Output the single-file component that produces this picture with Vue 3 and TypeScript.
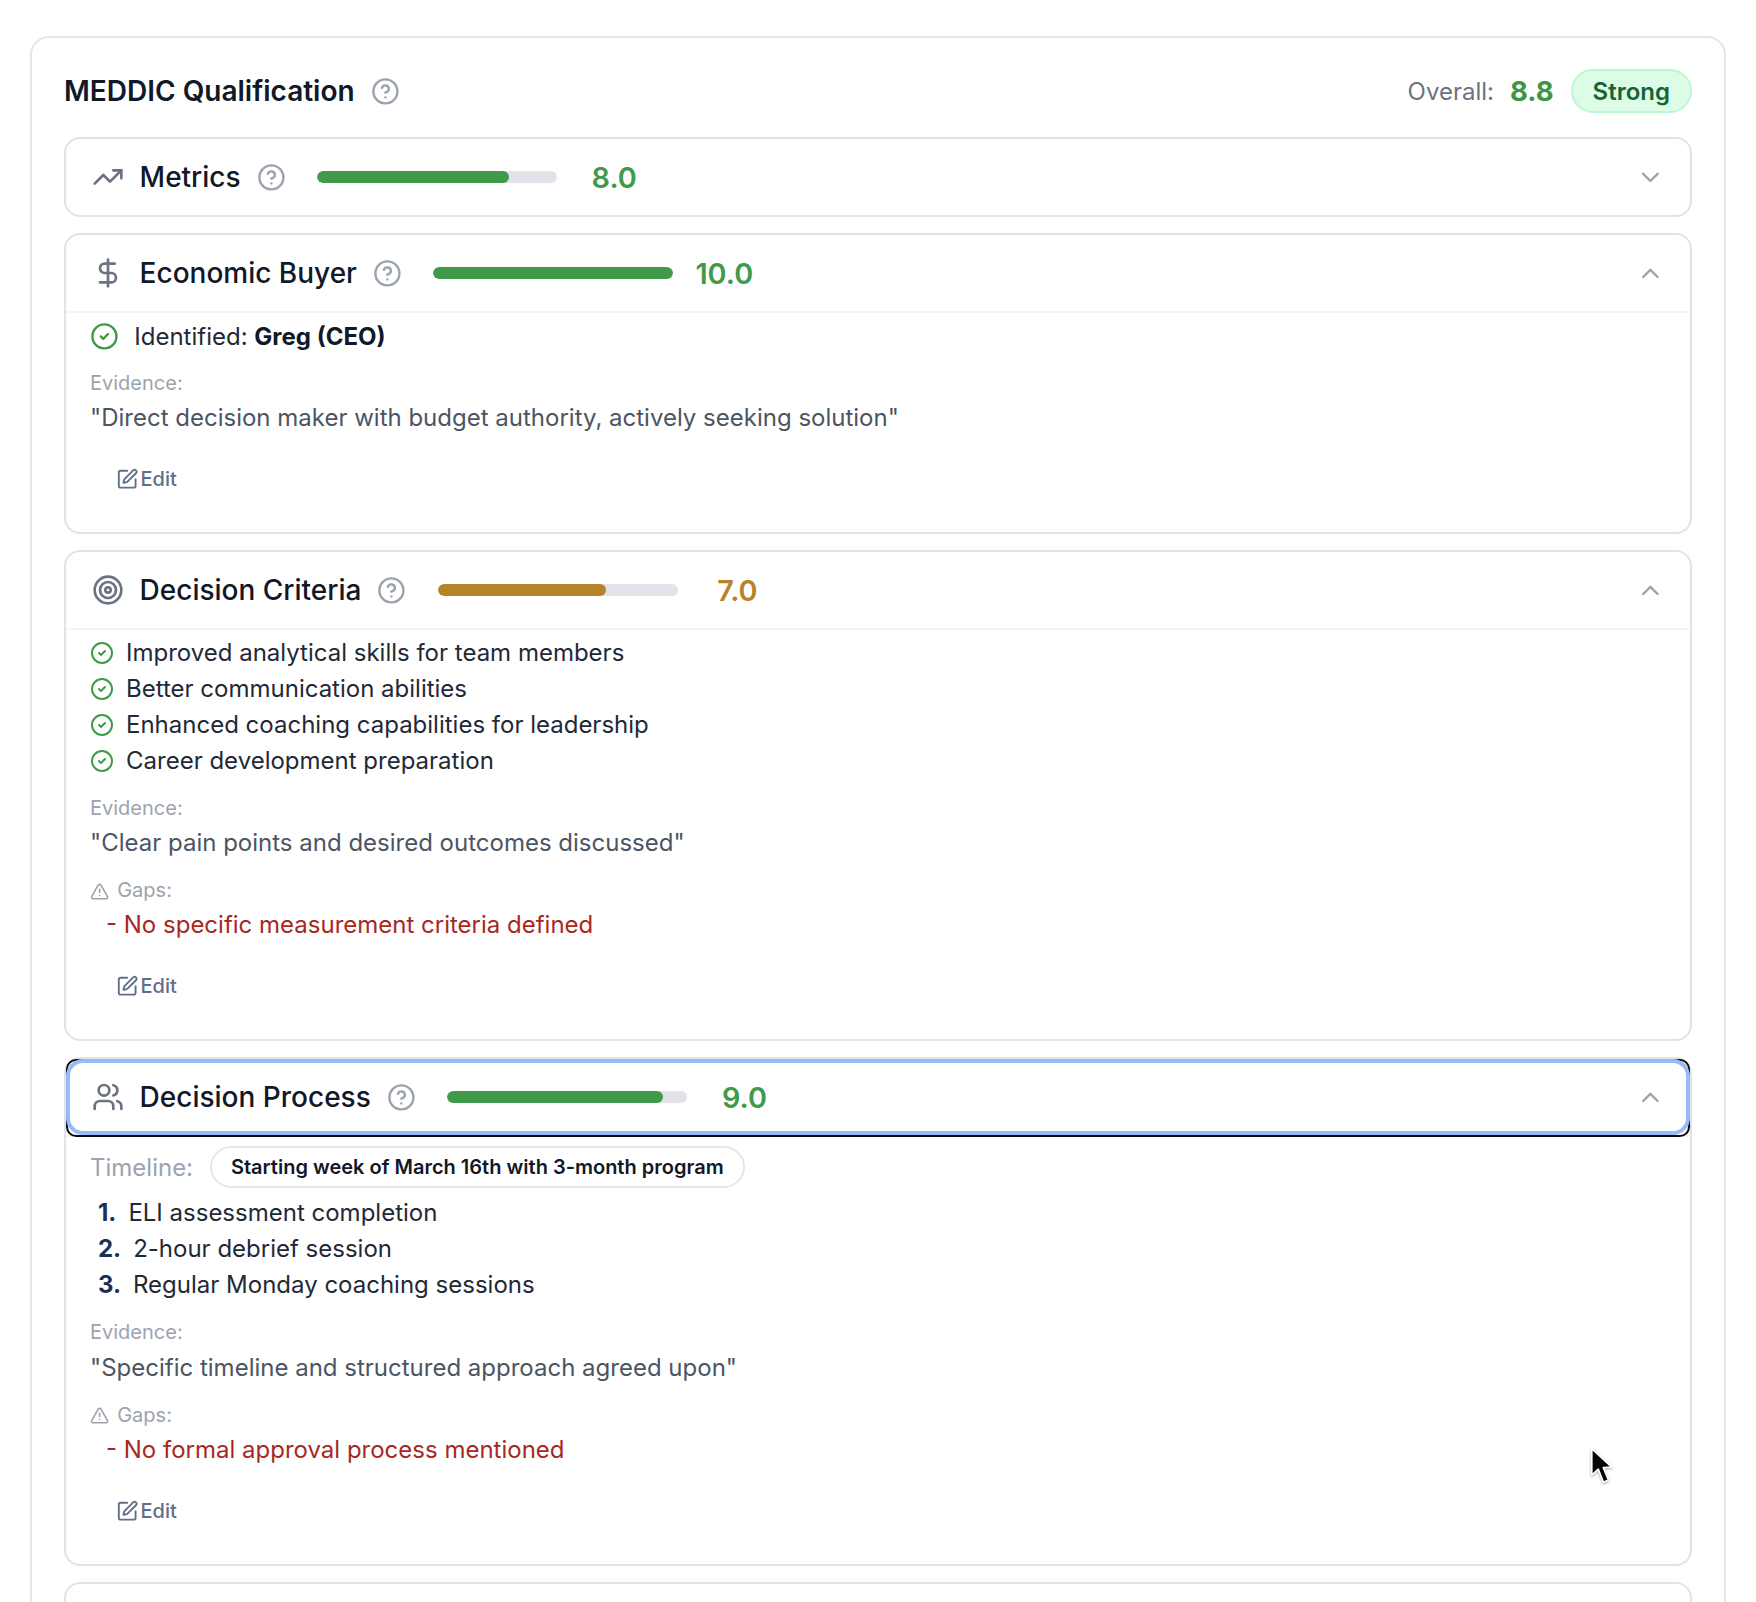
<template>
  <div class="page">
    <div class="meddic-card">
      <!-- 标题行 -->
      <div class="top-row">
        <div class="top-left">
          <h2 class="top-title">MEDDIC Qualification</h2>
          <LucideIcon name="help" :size="28.8" class="ic-help" />
        </div>
        <div class="top-right">
          <span class="overall-label">Overall:</span>
          <span class="overall-value">8.8</span>
          <span class="overall-pill">Strong</span>
        </div>
      </div>

      <div class="sections">
        <section v-for="s in sections" :key="s.key" class="section">
          <div class="sec-head" :class="{ focused: s.focused }">
            <LucideIcon :name="s.icon" :size="32" class="ic-sec" />
            <span class="sec-name">{{ s.name }}</span>
            <LucideIcon name="help" :size="28.8" class="ic-help" />
            <div class="bar">
              <div class="bar-fill" :class="s.tone" :style="{ width: s.score * 10 + '%' }"></div>
            </div>
            <span class="sec-score" :class="s.tone">{{ s.score.toFixed(1) }}</span>
            <LucideIcon :name="s.open ? 'chevronUp' : 'chevronDown'" :size="28.8" class="ic-chev" />
          </div>

          <div v-if="s.open" class="sec-body">
            <div v-if="s.identified" class="identified">
              <LucideIcon name="check" :size="28.8" class="ic-check" />
              <span>Identified: <b>{{ s.identified }}</b></span>
            </div>

            <div v-if="s.timeline" class="timeline">
              <span class="timeline-label">Timeline:</span>
              <span class="timeline-pill">{{ s.timeline }}</span>
            </div>

            <ul v-if="s.checks" class="check-list">
              <li v-for="c in s.checks" :key="c">
                <LucideIcon name="check" :size="24" class="ic-check" />
                <span>{{ c }}</span>
              </li>
            </ul>

            <ol v-if="s.steps" class="step-list">
              <li v-for="(step, i) in s.steps" :key="step">
                <span class="step-num">{{ i + 1 }}.</span>{{ step }}
              </li>
            </ol>

            <div class="label evidence-label">Evidence:</div>
            <div class="quote">"{{ s.evidence }}"</div>

            <template v-if="s.gap">
              <div class="label gaps-label">
                <LucideIcon name="alert" :size="19.2" />
                <span>Gaps:</span>
              </div>
              <div class="gap-line">- {{ s.gap }}</div>
            </template>

            <button class="edit-btn" type="button">
              <LucideIcon name="edit" :size="22.4" />
              <span>Edit</span>
            </button>
          </div>
        </section>

        <!-- 下一张卡片，只露出顶边 -->
        <section class="section next-section"></section>
      </div>
    </div>

    <svg class="cursor" width="26" height="41" viewBox="0 0 24 38">
      <path
        d="M2.5 1.5 L2.5 26 L8.6 20.6 L13.2 32.6 L18 30.6 L13.2 19.2 L21 18.6 Z"
        fill="#000" stroke="#fff" stroke-width="1.6" stroke-linejoin="round"
      />
    </svg>
  </div>
</template>

<script setup lang="ts">
import { h, type FunctionalComponent } from 'vue'

// 图标路径（lucide）
const iconPaths: Record<string, string[]> = {
  help: [
    'M12 2a10 10 0 1 0 0 20a10 10 0 1 0 0-20',
    'M9.09 9a3 3 0 0 1 5.83 1c0 2-3 3-3 3',
    'M12 17h.01',
  ],
  trend: ['M22 7 13.5 15.5 8.5 10.5 2 17', 'M16 7h6v6'],
  dollar: ['M12 2v20', 'M17 5H9.5a3.5 3.5 0 0 0 0 7h5a3.5 3.5 0 0 1 0 7H6'],
  target: [
    'M12 2a10 10 0 1 0 0 20a10 10 0 1 0 0-20',
    'M12 6a6 6 0 1 0 0 12a6 6 0 1 0 0-12',
    'M12 10a2 2 0 1 0 0 4a2 2 0 1 0 0-4',
  ],
  users: [
    'M16 21v-2a4 4 0 0 0-4-4H6a4 4 0 0 0-4 4v2',
    'M9 3a4 4 0 1 0 0 8a4 4 0 1 0 0-8',
    'M22 21v-2a4 4 0 0 0-3-3.87',
    'M16 3.13a4 4 0 0 1 0 7.75',
  ],
  chevronDown: ['m6 9 6 6 6-6'],
  chevronUp: ['m18 15-6-6-6 6'],
  check: ['M12 2a10 10 0 1 0 0 20a10 10 0 1 0 0-20', 'm9 12 2 2 4-4'],
  alert: [
    'm21.73 18-8-14a2 2 0 0 0-3.48 0l-8 14A2 2 0 0 0 4 21h16a2 2 0 0 0 1.73-3Z',
    'M12 9v4',
    'M12 17h.01',
  ],
  edit: [
    'M12 3H5a2 2 0 0 0-2 2v14a2 2 0 0 0 2 2h14a2 2 0 0 0 2-2v-7',
    'M18.375 2.625a1 1 0 0 1 3 3l-9.013 9.014a2 2 0 0 1-.853.505l-2.873.84a.5.5 0 0 1-.62-.62l.84-2.873a2 2 0 0 1 .506-.852z',
  ],
}

const LucideIcon: FunctionalComponent<{ name: string; size: number }> = (props) =>
  h(
    'svg',
    {
      width: props.size,
      height: props.size,
      viewBox: '0 0 24 24',
      fill: 'none',
      stroke: 'currentColor',
      'stroke-width': 2,
      'stroke-linecap': 'round',
      'stroke-linejoin': 'round',
      style: { flexShrink: 0 },
    },
    iconPaths[props.name].map((d) => h('path', { d })),
  )
LucideIcon.props = ['name', 'size']

interface Section {
  key: string
  name: string
  icon: string
  score: number
  tone: 'good' | 'warn'
  open: boolean
  focused?: boolean
  identified?: string
  timeline?: string
  checks?: string[]
  steps?: string[]
  evidence?: string
  gap?: string
}

const sections: Section[] = [
  { key: 'metrics', name: 'Metrics', icon: 'trend', score: 8, tone: 'good', open: false },
  {
    key: 'buyer',
    name: 'Economic Buyer',
    icon: 'dollar',
    score: 10,
    tone: 'good',
    open: true,
    identified: 'Greg (CEO)',
    evidence: 'Direct decision maker with budget authority, actively seeking solution',
  },
  {
    key: 'criteria',
    name: 'Decision Criteria',
    icon: 'target',
    score: 7,
    tone: 'warn',
    open: true,
    checks: [
      'Improved analytical skills for team members',
      'Better communication abilities',
      'Enhanced coaching capabilities for leadership',
      'Career development preparation',
    ],
    evidence: 'Clear pain points and desired outcomes discussed',
    gap: 'No specific measurement criteria defined',
  },
  {
    key: 'process',
    name: 'Decision Process',
    icon: 'users',
    score: 9,
    tone: 'good',
    open: true,
    focused: true,
    timeline: 'Starting week of March 16th with 3-month program',
    steps: ['ELI assessment completion', '2-hour debrief session', 'Regular Monday coaching sessions'],
    evidence: 'Specific timeline and structured approach agreed upon',
    gap: 'No formal approval process mentioned',
  },
]
</script>

<style>
html,
body {
  margin: 0;
  background: #fff;
}
</style>

<style scoped>
.page {
  position: relative;
  height: 1602px;
  overflow: hidden;
  padding: 36px 30px 0;
  box-sizing: border-box;
  background: #fff;
  font-family: Inter, 'Liberation Sans', sans-serif;
  color: #111827;
}

.meddic-card {
  border: 2px solid #e2e6f0;
  border-radius: 19px;
  padding: 31px 32px 32px;
}

/* 顶部标题 */
.top-row {
  display: flex;
  align-items: center;
  justify-content: space-between;
  height: 44px;
  margin-bottom: 24px;
}

.top-left,
.top-right {
  display: flex;
  align-items: center;
}

.top-title {
  margin: 0 16px 0 0;
  font-size: 28px;
  font-weight: 600;
  color: #111827;
}

.ic-help { color: #9ca3af; }

.overall-label {
  font-size: 24px;
  color: #6b7280;
  margin-right: 16px;
}

.overall-value {
  font-size: 27.5px;
  font-weight: 700;
  color: #3d9647;
  margin-right: 17px;
}

.overall-pill {
  display: flex;
  align-items: center;
  height: 44px;
  box-sizing: border-box;
  padding: 0 20px;
  border: 2px solid #bbf7d0;
  border-radius: 22px;
  background: #dcfce7;
  color: #166534;
  font-size: 24px;
  font-weight: 600;
}

/* 各项卡片 */
.sections {
  display: flex;
  flex-direction: column;
  gap: 16px;
}

.section {
  border: 2px solid #e2e3ea;
  border-radius: 16px;
}

.next-section { height: 80px; }

.sec-head {
  position: relative;
  display: flex;
  align-items: center;
  height: 76px;
  padding: 0 25.6px;
}

.sec-body {
  border-top: 2px solid #f3f4f6;
  padding: 5px 24px 27.5px;
}

/* 键盘焦点框 */
.sec-head.focused::before,
.sec-head.focused::after {
  content: '';
  position: absolute;
  left: 0;
  right: 0;
  top: 0;
  pointer-events: none;
}

.sec-head.focused::before {
  bottom: -2px;
  border: 2px solid #0b0b0b;
  border-radius: 10px;
}

.sec-head.focused::after {
  bottom: 0;
  border: 4px solid #97bbf7;
  border-radius: 17px;
}

.ic-sec {
  color: #6b7280;
  margin-right: 16px;
}

.sec-name {
  font-size: 28px;
  font-weight: 500;
  color: #111827;
  margin-right: 16px;
}

.bar {
  width: 240px;
  height: 12px;
  margin-left: 31.4px;
  border-radius: 6px;
  background: #e2e3e8;
  overflow: hidden;
}

.bar-fill {
  height: 100%;
  border-radius: 6px;
}

.bar-fill.good { background: #3f9a4a; }
.bar-fill.warn { background: #b7832a; }

.sec-score {
  width: 64px;
  margin-left: 16px;
  text-align: right;
  font-size: 28.8px;
  font-weight: 600;
}

.sec-score.good { color: #3f9a4a; }
.sec-score.warn { color: #b7832a; }

.ic-chev {
  margin-left: auto;
  color: #9ca3af;
}

/* 内容区 */
.identified {
  display: flex;
  align-items: center;
  gap: 15.5px;
  margin-bottom: 1px;
  height: 36px;
  font-size: 24px;
  color: #1f2937;
}

.identified b {
  font-weight: 700;
  color: #111827;
}

.ic-check { color: #3f9a4a; }

.check-list,
.step-list {
  list-style: none;
  margin: 0;
  padding: 0;
  font-size: 24px;
  line-height: 36px;
  color: #1f2937;
}

.check-list li {
  display: flex;
  align-items: center;
  gap: 12px;
}

.step-list { margin: 7px 0 0; }

.step-num {
  margin-left: 8px;
  margin-right: 12px;
  font-weight: 700;
  color: #1e2f55;
}

.timeline {
  display: flex;
  align-items: center;
  gap: 16.5px;
  margin-top: 4px;
}

.timeline-label {
  font-size: 24px;
  color: #9ca3af;
}

.timeline-pill {
  display: flex;
  align-items: center;
  height: 42px;
  box-sizing: border-box;
  padding: 0 19.4px;
  border: 2px solid #e2e6f0;
  border-radius: 21px;
  font-size: 20px;
  font-weight: 600;
  color: #111827;
}

.label {
  font-size: 20px;
  line-height: 25.6px;
  color: #9ca3af;
}

.evidence-label { margin-top: 16.6px; }

.quote {
  margin-top: 4px;
  font-size: 24px;
  line-height: 36px;
  color: #4b5563;
}

.gaps-label {
  display: flex;
  align-items: center;
  gap: 8px;
  margin-top: 17px;
}

.gap-line {
  margin-top: 3.5px;
  padding-left: 16px;
  font-size: 24px;
  line-height: 36px;
  color: #a8281f;
}

.edit-btn {
  display: flex;
  align-items: center;
  gap: 2.5px;
  height: 51px;
  margin-top: 17.5px;
  padding: 0 25.6px;
  border: none;
  background: transparent;
  color: #5f6f8a;
  font-family: inherit;
  font-size: 20px;
  font-weight: 500;
}

.cursor {
  position: absolute;
  left: 1589px;
  top: 1447px;
  filter: drop-shadow(0 1px 1px rgba(0, 0, 0, 0.35));
}
</style>
